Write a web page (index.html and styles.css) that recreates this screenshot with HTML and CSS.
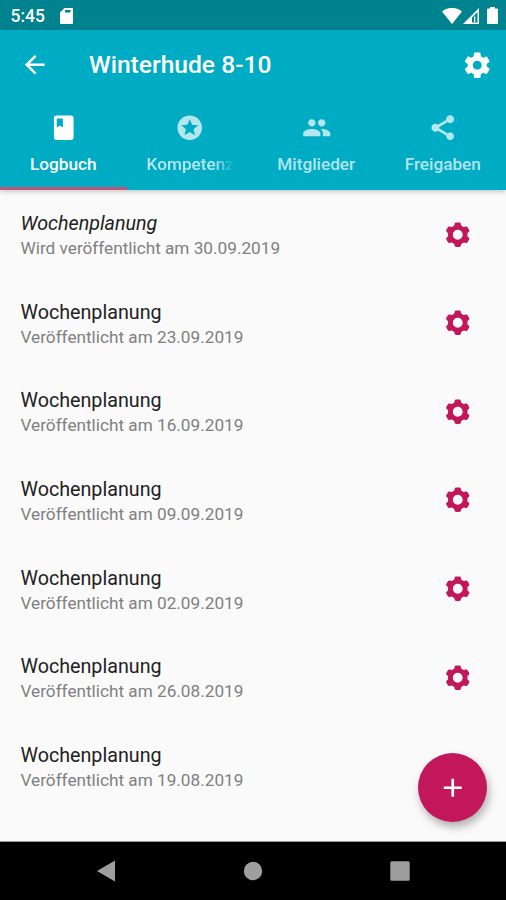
FILE: index.html
```html
<!DOCTYPE html>
<html lang="de">
<head>
<meta charset="utf-8">
<title>Winterhude 8-10</title>
<link rel="stylesheet" href="styles.css">
</head>
<body>
<svg class="defs" aria-hidden="true">
  <symbol id="gear" viewBox="0 0 24 24"><path d="M19.43 12.98c.04-.32.07-.64.07-.98s-.03-.66-.07-.98l2.11-1.65c.19-.15.24-.42.12-.64l-2-3.46c-.12-.22-.39-.3-.61-.22l-2.49 1c-.52-.4-1.08-.73-1.69-.98l-.38-2.65C14.46 2.18 14.25 2 14 2h-4c-.25 0-.46.18-.49.42l-.38 2.65c-.61.25-1.17.59-1.69.98l-2.49-1c-.23-.09-.49 0-.61.22l-2 3.46c-.13.22-.07.49.12.64l2.11 1.65c-.04.32-.07.65-.07.98s.03.66.07.98l-2.11 1.65c-.19.15-.24.42-.12.64l2 3.46c.12.22.39.3.61.22l2.49-1c.52.4 1.08.73 1.69.98l.38 2.65c.03.24.24.42.49.42h4c.25 0 .46-.18.49-.42l.38-2.65c.61-.25 1.17-.59 1.69-.98l2.49 1c.23.09.49 0 .61-.22l2-3.46c.12-.22.07-.49-.12-.64l-2.11-1.65zM12 15.500c-1.930 0-3.500-1.570-3.500-3.500s1.570-3.500 3.500-3.500 3.500 1.570 3.500 3.500-1.570 3.500-3.500 3.500z"/></symbol>
  <symbol id="cog" viewBox="0 0 24 24">
    <circle cx="12" cy="12" r="6" fill="none" stroke="currentColor" stroke-width="4"/>
    <path id="tooth" d="M8.600 7.800l.8-4.600q.2-1.200 1.300-1.200h2.600q1.100 0 1.300 1.200l.8 4.600q-3.400-1.800-6.800 0z"/>
    <use href="#tooth" transform="rotate(60 12 12)"/>
    <use href="#tooth" transform="rotate(120 12 12)"/>
    <use href="#tooth" transform="rotate(180 12 12)"/>
    <use href="#tooth" transform="rotate(240 12 12)"/>
    <use href="#tooth" transform="rotate(300 12 12)"/>
  </symbol>
</svg>
<div class="screen">
  <div class="status">
    <span class="time">5:45</span>
    <svg class="sd" viewBox="0 0 13 16"><path fill-rule="evenodd" d="M4.500 0H12a1 1 0 0 1 1 1v14a1 1 0 0 1-1 1H1a1 1 0 0 1-1-1V4.500zM5 2v2.500h5.500V2z"/></svg>
    <span class="spacer"></span>
    <svg class="wifi" viewBox="0 0 20 16"><path d="M0 3.500C5.500-1.200 14.500-1.200 20 3.500L10 16z"/></svg>
    <svg class="signal" viewBox="0 0 16 16"><path fill-rule="evenodd" d="M16 0v16H0zM14.500 4L9 9.500v5h5.500z"/><path d="M11 8.500h1.300V14H11z"/></svg>
    <svg class="battery" viewBox="0 0 11 17"><path d="M3 0h5v1.500h2a1 1 0 0 1 1 1V16a1 1 0 0 1-1 1H1a1 1 0 0 1-1-1V2.500a1 1 0 0 1 1-1h2z"/></svg>
  </div>
  <header class="appbar">
    <div class="toolbar">
      <svg class="icon back" viewBox="0 0 24 24"><path d="M20 11H7.830l5.590-5.590L12 4l-8 8 8 8 1.410-1.410L7.830 13H20v-2z"/></svg>
      <h1>Winterhude 8-10</h1>
      <svg class="icon settings"><use href="#gear"/></svg>
    </div>
    <nav class="tabs">
      <div class="tab active">
        <svg class="icon" viewBox="0 0 24 24"><path fill-rule="evenodd" d="M18 2H6c-1.100 0-2 .9-2 2v16c0 1.100.9 2 2 2h12c1.100 0 2-.9 2-2V4c0-1.100-.9-2-2-2zM6.300 4.500h5v7.200l-2.500-1.500-2.500 1.500V4.500z"/></svg>
        <span>Logbuch</span>
      </div>
      <div class="tab">
        <svg class="icon" viewBox="0 0 24 24"><path d="M11.990 2C6.470 2 2 6.480 2 12s4.470 10 9.990 10C17.520 22 22 17.520 22 12S17.520 2 11.990 2zm4.240 16L12 15.450 7.770 18l1.120-4.810-3.730-3.230 4.920-.42L12 5l1.920 4.530 4.920.42-3.730 3.230L16.230 18z"/></svg>
        <span class="faded">Kompetenz</span>
      </div>
      <div class="tab">
        <svg class="icon" viewBox="0 0 24 24"><path d="M16 11c1.660 0 2.990-1.340 2.990-3S17.660 5 16 5c-1.660 0-3 1.340-3 3s1.340 3 3 3zm-8 0c1.660 0 2.990-1.340 2.990-3S9.660 5 8 5C6.340 5 5 6.340 5 8s1.340 3 3 3zm0 2c-2.330 0-7 1.170-7 3.500V19h14v-2.500c0-2.330-4.670-3.500-7-3.500zm8 0c-.29 0-.62.020-.97.050 1.160.84 1.970 1.970 1.970 3.450V19h6v-2.500c0-2.330-4.670-3.500-7-3.500z"/></svg>
        <span>Mitglieder</span>
      </div>
      <div class="tab">
        <svg class="icon share" viewBox="0 0 24 24"><path d="M18 16.080c-.76 0-1.440.3-1.960.77L8.910 12.700c.05-.23.09-.46.09-.7s-.04-.47-.09-.7l7.050-4.110c.54.5 1.250.81 2.040.81 1.660 0 3-1.340 3-3s-1.340-3-3-3-3 1.340-3 3c0 .24.04.47.09.7L8.040 9.810C7.500 9.310 6.790 9 6 9c-1.660 0-3 1.340-3 3s1.340 3 3 3c.79 0 1.500-.31 2.040-.81l7.120 4.160c-.05.21-.08.43-.08.65 0 1.610 1.310 2.920 2.920 2.920s2.920-1.310 2.920-2.920-1.310-2.920-2.920-2.920z"/></svg>
        <span>Freigaben</span>
      </div>
    </nav>
  </header>
  <main class="list">
    <div class="row"><div><p class="title draft">Wochenplanung</p><p class="sub">Wird veröffentlicht am 30.09.2019</p></div><svg class="icon"><use href="#cog"/></svg></div>
    <div class="row"><div><p class="title">Wochenplanung</p><p class="sub">Veröffentlicht am 23.09.2019</p></div><svg class="icon"><use href="#cog"/></svg></div>
    <div class="row"><div><p class="title">Wochenplanung</p><p class="sub">Veröffentlicht am 16.09.2019</p></div><svg class="icon"><use href="#cog"/></svg></div>
    <div class="row"><div><p class="title">Wochenplanung</p><p class="sub">Veröffentlicht am 09.09.2019</p></div><svg class="icon"><use href="#cog"/></svg></div>
    <div class="row"><div><p class="title">Wochenplanung</p><p class="sub">Veröffentlicht am 02.09.2019</p></div><svg class="icon"><use href="#cog"/></svg></div>
    <div class="row"><div><p class="title">Wochenplanung</p><p class="sub">Veröffentlicht am 26.08.2019</p></div><svg class="icon"><use href="#cog"/></svg></div>
    <div class="row"><div><p class="title">Wochenplanung</p><p class="sub">Veröffentlicht am 19.08.2019</p></div></div>
    <div class="fab"><svg class="icon" viewBox="0 0 24 24"><path d="M19.300 13.100h-6.200v6.200h-2.200v-6.200H4.700v-2.200h6.200V4.700h2.200v6.200h6.200v2.200z"/></svg></div>
  </main>
  <footer class="navbar">
    <svg viewBox="0 0 20 22"><path d="M19 .5v21L1 11z"/></svg>
    <svg viewBox="0 0 20 22"><circle cx="10" cy="11" r="9.200"/></svg>
    <svg viewBox="0 0 20 22"><rect x=".3" y="1.300" width="19.400" height="19.400" rx="1.500"/></svg>
  </footer>
</div>
</body>
</html>
```
FILE: styles.css
```css
* { box-sizing: border-box; }
body { margin: 0; font-family: Roboto, "Liberation Sans", sans-serif; }
h1, p { margin: 0; }
svg { display: block; fill: currentColor; flex: none; }
.defs { position: absolute; width: 0; height: 0; }
.icon { width: 29.5px; height: 29.5px; }
.screen { width: 506px; height: 900px; display: flex; flex-direction: column; background: #fafafa; overflow: hidden; }

.status { height: 30px; flex: none; display: flex; align-items: center; padding: 1px 8px 0 10.500px; background: #00838f; color: #fff; }
.time { font-size: 17.500px; font-weight: 500; width: 49.500px; }
.sd { width: 13px; height: 16px; }
.spacer { flex: 1; }
.wifi { width: 20px; height: 16px; }
.signal { width: 16px; height: 16px; margin-left: 1px; }
.battery { width: 11px; height: 17px; margin-left: 8px; }

.appbar { height: 160px; flex: none; display: flex; flex-direction: column; background: #00acc4; color: #fff; box-shadow: 0 2px 5px rgba(0, 0, 0, .2); z-index: 1; }
.toolbar { height: 70px; display: flex; align-items: center; padding: 0 14px 0 20px; }
.toolbar h1 { flex: 1; margin-left: 39.500px; font-size: 24.600px; line-height: 30px; font-weight: 500; }
.toolbar .settings { width: 30.500px; height: 30.500px; }
.tabs { flex: 1; display: grid; grid-template-columns: repeat(4, 1fr); }
.tab { display: flex; flex-direction: column; align-items: center; padding-top: 12.500px; color: rgba(255, 255, 255, .7); border-bottom: 3px solid transparent; }
.tab.active { color: #fff; border-bottom-color: #c2537a; }
.tab span { margin-top: 12px; font-size: 17.200px; line-height: 20px; font-weight: 500; white-space: nowrap; }
.tab .faded { padding-left: 1px; -webkit-mask-image: linear-gradient(90deg, #000 78%, transparent); mask-image: linear-gradient(90deg, #000 78%, transparent); }
.share { stroke: currentColor; stroke-width: .4px; }

.list { height: 652px; flex: none; position: relative; border-bottom: 1px solid #999; }
.row { height: 88.600px; display: flex; align-items: center; justify-content: space-between; padding: 0 34px 0 20.500px; }
.title { margin-top: 3px; font-size: 19.700px; line-height: 24px; color: #212121; }
.draft { font-style: italic; }
.sub { margin-top: 1px; font-size: 17.200px; line-height: 22px; color: #808080; }
.row .icon { color: #c2185b; }
.fab { position: absolute; right: 19px; bottom: 19px; width: 69px; height: 69px; border-radius: 50%; display: flex; align-items: center; justify-content: center; background: #c2185b; color: #fff; box-shadow: 2px 5px 9px rgba(0, 0, 0, .3); }

.navbar { flex: 1; display: flex; justify-content: space-between; align-items: center; padding: 0 96.500px 0 96px; background: #000; color: #9e9e9e; }
.navbar svg { width: 20px; height: 22px; }
```
